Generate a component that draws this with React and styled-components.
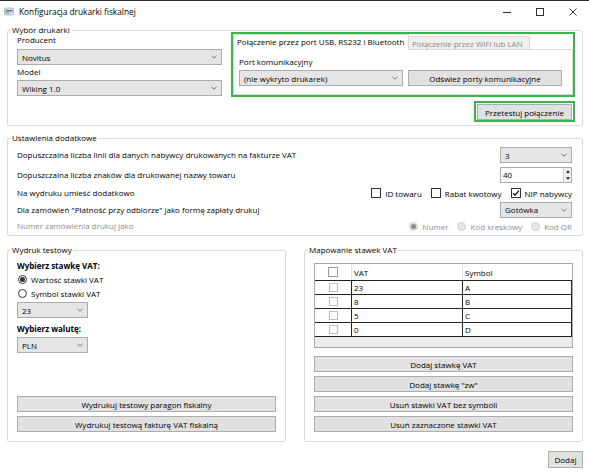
import React from "react";
import styled, { createGlobalStyle } from "styled-components";

const GlobalStyle = createGlobalStyle`
  html, body { margin: 0; padding: 0; background: #fff; }
  body {
    font-family: "Open Sans", "Noto Sans", sans-serif;
    font-size: 8px;
    color: #000;
  }
  * { box-sizing: border-box; }
`;

const Window = styled.div`
  width: 589px;
  height: 473px;
  background: #fff;
  border-top: 1px solid #2b2b2b;
  display: flex;
  flex-direction: column;
  overflow: hidden;
`;

const TitleBar = styled.div`
  height: 21px;
  display: flex;
  align-items: center;
  padding-left: 4px;
`;

const Title = styled.span`
  flex: 1;
  margin-left: 5px;
  font-size: 8.3px;
`;

const CaptionButton = styled.div`
  width: 33px;
  height: 21px;
  display: flex;
  align-items: center;
  justify-content: center;
`;

const Body = styled.div`
  display: flex;
  flex-direction: column;
  padding: 8px 6px 0 7px;
`;

const Group = styled.div`
  border: 1px solid #dcdcdc;
  border-radius: 2px;
  display: flex;
  flex-direction: column;
  height: ${(p) => p.$h}px;
  margin-top: ${(p) => p.$mt || 0}px;
  padding: 0 ${(p) => p.$pr}px 0 9px;
`;

const Caption = styled.div`
  align-self: flex-start;
  height: 12px;
  line-height: 12px;
  margin: -7px 0 -5px -6px;
  padding: 0 1px;
  background: #fff;
`;

const Row = styled.div`
  display: flex;
  align-items: ${(p) => p.$align || "center"};
  justify-content: ${(p) => p.$justify || "flex-start"};
  height: ${(p) => (p.$h ? `${p.$h}px` : "auto")};
  margin-top: ${(p) => p.$mt || 0}px;
  gap: ${(p) => p.$gap || 0}px;
`;

const Column = styled.div`
  display: flex;
  flex-direction: column;
  align-items: ${(p) => p.$align || "stretch"};
  width: ${(p) => (p.$w ? `${p.$w}px` : "auto")};
  margin-left: ${(p) => p.$ml || 0}px;
  margin-top: ${(p) => p.$mt || 0}px;
`;

const Label = styled.div`
  height: 12px;
  line-height: 12px;
  white-space: nowrap;
  margin-top: ${(p) => p.$mt || 0}px;
  color: ${(p) => (p.$disabled ? "#8d8d8d" : "#000")};
  font-weight: ${(p) => (p.$bold ? 700 : 400)};
`;

const ComboBox = styled.div`
  width: ${(p) => p.$w}px;
  height: 16px;
  flex: none;
  margin-top: ${(p) => p.$mt || 0}px;
  background: #e5e5e5;
  border: 1px solid #acacac;
  display: flex;
  align-items: center;
  justify-content: space-between;
  padding: 0 4px 0 4px;
  white-space: nowrap;
`;

const Button = styled.div`
  height: 16px;
  width: ${(p) => (p.$w ? `${p.$w}px` : "auto")};
  flex: none;
  margin-top: ${(p) => p.$mt || 0}px;
  margin-left: ${(p) => p.$ml || 0}px;
  background: #e1e1e1;
  border: 1px solid #adadad;
  display: flex;
  align-items: center;
  justify-content: center;
  white-space: nowrap;
`;

const Spacer = styled.div`
  flex: 1;
`;

const Highlight = styled.div`
  border: 2px solid #3cb44b;
  width: ${(p) => p.$w}px;
  height: ${(p) => p.$h}px;
  margin-top: ${(p) => p.$mt || 0}px;
  padding: ${(p) => p.$pad || 0}px;
  display: flex;
  flex-direction: column;
`;

const TabStrip = styled.div`
  display: flex;
  align-items: flex-end;
  height: 16px;
`;

const Tab = styled.div`
  height: ${(p) => (p.$active ? 16 : 14)}px;
  width: ${(p) => p.$w}px;
  padding: 0 3px;
  line-height: 13px;
  white-space: nowrap;
  background: ${(p) => (p.$active ? "#fff" : "#f0f0f0")};
  color: ${(p) => (p.$active ? "#000" : "#8a8a8a")};
  border: 1px solid #d9d9d9;
  border-bottom: ${(p) => (p.$active ? "none" : "1px solid #d9d9d9")};
  border-left: ${(p) => (p.$active ? "1px solid #d9d9d9" : "none")};
`;

const TabFill = styled.div`
  flex: 1;
  border-bottom: 1px solid #d9d9d9;
`;

const TabPanel = styled.div`
  flex: 1;
  border: 1px solid #d9d9d9;
  border-top: none;
  padding: 6px 0 0 5px;
`;

const NumericBox = styled.div`
  width: 72px;
  height: 16px;
  display: flex;
  border: 1px solid #acacac;
  background: #fff;
`;

const NumericValue = styled.div`
  flex: 1;
  padding-left: 2px;
  line-height: 14px;
`;

const Spinner = styled.div`
  width: 8px;
  border-left: 1px solid #d0d0d0;
  background: #f0f0f0;
  display: flex;
  flex-direction: column;
  align-items: center;
  justify-content: space-around;
`;

const Check = styled.span`
  display: flex;
  align-items: center;
  gap: 4px;
  white-space: nowrap;
`;

const Box = styled.span`
  width: ${(p) => p.$size || 10}px;
  height: ${(p) => p.$size || 10}px;
  border: 1px solid ${(p) => p.$border || "#333"};
  background: #fff;
  display: flex;
  align-items: center;
  justify-content: center;
`;

const Radio = styled.span`
  display: flex;
  align-items: center;
  gap: 4px;
  white-space: nowrap;
  color: ${(p) => (p.$disabled ? "#8d8d8d" : "#000")};
  height: ${(p) => (p.$h ? `${p.$h}px` : "auto")};
  margin-left: ${(p) => p.$ml || 0}px;
`;

const Circle = styled.span`
  width: 9px;
  height: 9px;
  border-radius: 50%;
  border: 1px solid ${(p) => (p.$disabled ? "#cfcfcf" : "#333")};
  background: ${(p) => (p.$disabled ? "#e6e6e6" : "#fff")};
  display: flex;
  align-items: center;
  justify-content: center;
  &::after {
    content: "";
    display: ${(p) => (p.$on ? "block" : "none")};
    width: 5px;
    height: 5px;
    border-radius: 50%;
    background: ${(p) => (p.$disabled ? "#8a8a8a" : "#333")};
  }
`;

const Table = styled.div`
  height: 85px;
  margin-top: 12px;
  border: 1px solid #a9a9a9;
  background: #ebebeb;
  display: flex;
  flex-direction: column;
`;

const GridRow = styled.div`
  display: grid;
  grid-template-columns: 36px 111px 110px;
  width: 257px;
  height: ${(p) => p.$h}px;
  background: #fff;
  border-top: ${(p) => (p.$first ? "1px solid #222" : "none")};
  border-bottom: ${(p) => (p.$header ? "none" : "1px solid #222")};
`;

const Cell = styled.div`
  display: flex;
  align-items: center;
  justify-content: ${(p) => (p.$center ? "center" : "flex-start")};
  padding-left: ${(p) => (p.$center ? 0 : 2)}px;
  border-left: ${(p) =>
    p.$line ? `1px solid ${p.$header ? "#e3e3e3" : "#222"}` : "none"};
  border-right: ${(p) => (p.$end && !p.$header ? "1px solid #222" : "none")};
`;

const Chevron = () => (
  <svg width="6" height="4" viewBox="0 0 6 4">
    <path d="M0.5 0.8 L3 3.2 L5.5 0.8" fill="none" stroke="#6a6a6a" strokeWidth="0.9" />
  </svg>
);

const Combo = ({ w, mt, children }) => (
  <ComboBox $w={w} $mt={mt}>
    <span>{children}</span>
    <Chevron />
  </ComboBox>
);

const CheckMark = () => (
  <svg width="8" height="8" viewBox="0 0 8 8">
    <path d="M1 4.2 L3 6.2 L7 1.6" fill="none" stroke="#000" strokeWidth="1.2" />
  </svg>
);

const AppIcon = () => (
  <svg width="10" height="9" viewBox="0 0 10 9">
    <rect x="0.5" y="1" width="9" height="7" rx="1" fill="#d6d9de" stroke="#9aa3ad" strokeWidth="0.6" />
    <rect x="1.5" y="3" width="7" height="1.4" fill="#3d7fc4" />
    <rect x="1.5" y="5.4" width="4" height="0.9" fill="#7a828c" />
  </svg>
);

const vatRows = [
  ["23", "A"],
  ["8", "B"],
  ["5", "C"],
  ["0", "D"],
];

export default function App() {
  return (
    <>
      <GlobalStyle />
      <Window>
        <TitleBar>
          <AppIcon />
          <Title>Konfiguracja drukarki fiskalnej</Title>
          <CaptionButton>
            <svg width="10" height="10" viewBox="0 0 10 10">
              <path d="M1 5.5 H9" stroke="#333" strokeWidth="1" />
            </svg>
          </CaptionButton>
          <CaptionButton>
            <svg width="10" height="10" viewBox="0 0 10 10">
              <rect x="1.5" y="1.5" width="7" height="7" fill="none" stroke="#333" strokeWidth="1" />
            </svg>
          </CaptionButton>
          <CaptionButton>
            <svg width="10" height="10" viewBox="0 0 10 10">
              <path d="M1.5 1.5 L8.5 8.5 M8.5 1.5 L1.5 8.5" stroke="#333" strokeWidth="1" />
            </svg>
          </CaptionButton>
        </TitleBar>

        <Body>
          <Group $h={96} $pr={8}>
            <Caption>Wybór drukarki</Caption>
            <Row $align="flex-start" $mt={1}>
              <Column $w={205} $mt={2}>
                <Label>Producent</Label>
                <Combo w={205} mt={3}>Novitus</Combo>
                <Label $mt={1}>Model</Label>
                <Combo w={205} mt={2}>Wiking 1.0</Combo>
              </Column>
              <Column $w={344} $ml={9} $align="flex-end">
                <Highlight $w={344} $h={65}>
                  <TabStrip>
                    <Tab $active $w={176}>Połączenie przez port USB, RS232 i Bluetooth</Tab>
                    <Tab $w={121}>Połączenie przez WiFi lub LAN</Tab>
                    <TabFill />
                  </TabStrip>
                  <TabPanel>
                    <Label>Port komunikacyjny</Label>
                    <Row $mt={2}>
                      <Combo w={164}>(nie wykryto drukarek)</Combo>
                      <Button $w={154} $ml={5}>Odśwież porty komunikacyjne</Button>
                    </Row>
                  </TabPanel>
                </Highlight>
                <Highlight $w={101} $h={21} $mt={4} $pad={1}>
                  <Button $h={17}>Przetestuj połączenie</Button>
                </Highlight>
              </Column>
            </Row>
          </Group>

          <Group $h={98} $pr={10} $mt={12}>
            <Caption>Ustawienia dodatkowe</Caption>
            <Row $h={18} $mt={7} $justify="space-between">
              <Label>Dopuszczalna liczba linii dla danych nabywcy drukowanych na fakturze VAT</Label>
              <Combo w={72}>3</Combo>
            </Row>
            <Row $h={22} $justify="space-between">
              <Label>Dopuszczalna liczba znaków dla drukowanej nazwy towaru</Label>
              <NumericBox>
                <NumericValue>40</NumericValue>
                <Spinner>
                  <svg width="4" height="3" viewBox="0 0 4 3">
                    <path d="M0 3 L2 0 L4 3 Z" fill="#333" />
                  </svg>
                  <svg width="4" height="3" viewBox="0 0 4 3">
                    <path d="M0 0 L2 3 L4 0 Z" fill="#333" />
                  </svg>
                </Spinner>
              </NumericBox>
            </Row>
            <Row $h={14} $justify="space-between">
              <Label>Na wydruku umieść dodatkowo</Label>
              <Row $gap={9}>
                <Check>
                  <Box />
                  ID towaru
                </Check>
                <Check>
                  <Box />
                  Rabat kwotowy
                </Check>
                <Check>
                  <Box>
                    <CheckMark />
                  </Box>
                  NIP nabywcy
                </Check>
              </Row>
            </Row>
            <Row $h={19} $justify="space-between">
              <Label>Dla zamówień "Płatność przy odbiorze" jako formę zapłaty drukuj</Label>
              <Combo w={72}>Gotówka</Combo>
            </Row>
            <Row $h={14} $justify="space-between">
              <Label $disabled>Numer zamówienia drukuj jako</Label>
              <Row $gap={9}>
                <Radio $disabled>
                  <Circle $disabled $on />
                  Numer
                </Radio>
                <Radio $disabled>
                  <Circle $disabled />
                  Kod kreskowy
                </Radio>
                <Radio $disabled>
                  <Circle $disabled />
                  Kod QR
                </Radio>
              </Row>
            </Row>
          </Group>

          <Row $align="flex-start" $gap={18} $mt={14}>
            <Group $h={192} $pr={9} style={{ width: 279 }}>
              <Caption>Wydruk testowy</Caption>
              <Label $bold $mt={9}>Wybierz stawkę VAT:</Label>
              <Radio $h={14} $ml={1}>
                <Circle $on />
                Wartość stawki VAT
              </Radio>
              <Radio $h={14} $ml={1}>
                <Circle />
                Symbol stawki VAT
              </Radio>
              <Combo w={71} mt={2}>23</Combo>
              <Label $bold $mt={5}>Wybierz walutę:</Label>
              <Combo w={71} mt={2}>PLN</Combo>
              <Spacer />
              <Button>Wydrukuj testowy paragon fiskalny</Button>
              <Button $mt={4}>Wydrukuj testową fakturę VAT fiskalną</Button>
              <Spacer style={{ flex: "none", height: 9 }} />
            </Group>

            <Group $h={192} $pr={9} style={{ width: 279 }}>
              <Caption>Mapowanie stawek VAT</Caption>
              <Table>
                <GridRow $h={16} $header>
                  <Cell $center>
                    <Box $size={10} $border="#9a9a9a" />
                  </Cell>
                  <Cell $line $header>VAT</Cell>
                  <Cell $line $header>Symbol</Cell>
                </GridRow>
                {vatRows.map(([vat, sym], i) => (
                  <GridRow key={vat} $h={i === 0 ? 15 : 14} $first={i === 0}>
                    <Cell $center>
                      <Box $size={9} $border="#bdbdbd" />
                    </Cell>
                    <Cell $line>{vat}</Cell>
                    <Cell $line $end>{sym}</Cell>
                  </GridRow>
                ))}
              </Table>
              <Button $mt={8}>Dodaj stawkę VAT</Button>
              <Button $mt={4}>Dodaj stawkę "zw"</Button>
              <Button $mt={4}>Usuń stawki VAT bez symboli</Button>
              <Button $mt={4}>Usuń zaznaczone stawki VAT</Button>
            </Group>
          </Row>

          <Row $justify="flex-end" $mt={9}>
            <Button $w={35} style={{ height: 17 }}>Dodaj</Button>
          </Row>
        </Body>
      </Window>
    </>
  );
}
